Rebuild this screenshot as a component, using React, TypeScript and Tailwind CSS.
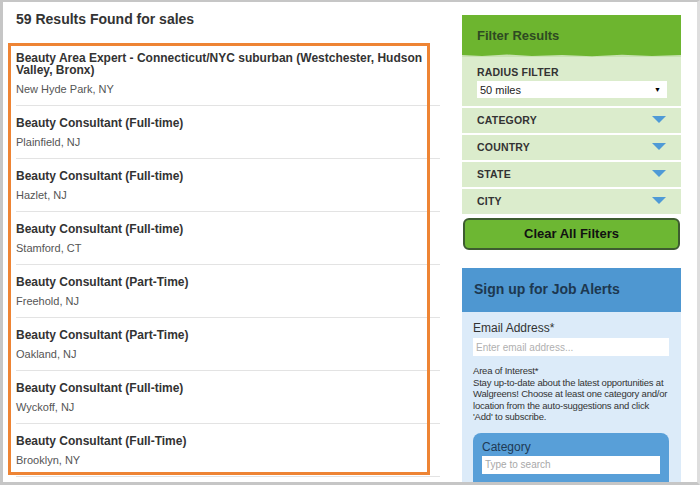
import React from 'react';

type Job = { title: string; place: string };

const jobs: Job[] = [
  { title: 'Beauty Area Expert - Connecticut/NYC suburban (Westchester, Hudson Valley, Bronx)', place: 'New Hyde Park, NY' },
  { title: 'Beauty Consultant (Full-time)', place: 'Plainfield, NJ' },
  { title: 'Beauty Consultant (Full-time)', place: 'Hazlet, NJ' },
  { title: 'Beauty Consultant (Full-time)', place: 'Stamford, CT' },
  { title: 'Beauty Consultant (Part-Time)', place: 'Freehold, NJ' },
  { title: 'Beauty Consultant (Part-Time)', place: 'Oakland, NJ' },
  { title: 'Beauty Consultant (Full-time)', place: 'Wyckoff, NJ' },
  { title: 'Beauty Consultant (Full-Time)', place: 'Brooklyn, NY' },
];

const filters = ['CATEGORY', 'COUNTRY', 'STATE', 'CITY'];

function Caret() {
  return (
    <svg width="14" height="7" viewBox="0 0 14 7" className="mb-[3px] shrink-0">
      <path d="M0 0 H14 L7 7 Z" fill="#4f9ad6" />
    </svg>
  );
}

export default function App() {
  return (
    <div className="relative h-[485px] w-[700px] overflow-hidden border-t-2 border-b-[3px] border-l-[3px] border-r-[3px] border-[#c6c6c6] border-r-[#dedede] bg-white font-['Liberation_Sans',Arial,sans-serif] text-[#333]">
      <div className="flex">
        {/* results column */}
        <div className="w-[442px] pl-[13px] pr-[5px]">
          <h2 className="pt-[9px] text-[14px] font-bold leading-[16px] text-[#333]">59 Results Found for sales</h2>
          <ul className="mt-[14px]">
            {jobs.map((job, i) => (
              <li key={i} className="border-b border-[#e3e3e3] pt-[11px] pb-[9px]">
                <p className="text-[12px] font-bold leading-[12px] text-[#333]">{job.title}</p>
                <p className="mt-[6px] text-[11px] leading-[14px] text-[#555]">{job.place}</p>
              </li>
            ))}
          </ul>
        </div>

        {/* sidebar */}
        <aside className="ml-[17px] w-[219px] pt-[13px]">
          <div className="relative h-[42px] bg-[#6db52f] pl-[15px] pt-[13px]">
            <h3 className="text-[13px] font-bold leading-[16px] text-[#2e4a22]">Filter Results</h3>
            <svg className="absolute bottom-0 left-0" width="219" height="4" viewBox="0 0 219 4" preserveAspectRatio="none">
              <path d="M0 2 L20 3 L45 1.5 L70 3 L100 2 L130 3.2 L160 1.8 L190 3 L219 2 V4 H0 Z" fill="#c9e2b3" />
            </svg>
          </div>
          <div className="bg-[#dbeccc] px-[15px] pt-[9px] pb-[8px]">
            <p className="text-[10.5px] font-bold leading-[12px] tracking-[0.2px] text-[#333]">RADIUS FILTER</p>
            <div className="mt-[3px] flex h-[17px] w-[190px] items-center justify-between bg-white pl-[3px] pr-[6px]">
              <span className="text-[11px] leading-[12px] text-[#222]">50 miles</span>
              <span className="text-[7px] leading-none text-black">▼</span>
            </div>
          </div>
          {filters.map((f) => (
            <div key={f} className="mt-[2px] flex h-[25px] items-center justify-between bg-[#dbeccc] pl-[15px] pr-[15px]">
              <span className="text-[10.5px] font-bold tracking-[0.2px] text-[#333]">{f}</span>
              <Caret />
            </div>
          ))}

          <button
            type="button"
            className="mt-[4px] ml-[1px] flex h-[32px] w-[217px] items-center justify-center rounded-[6px] border-2 border-[#3d5c30] bg-[#6db733] text-[13px] font-bold text-[#111]"
          >
            Clear All Filters
          </button>

          <div className="mt-[18px]">
            <div className="h-[44px] bg-[#4e97d1] pl-[12px] pt-[13px]">
              <h3 className="text-[14px] font-bold leading-[16px] text-[#1d3850]">Sign up for Job Alerts</h3>
            </div>
            <div className="h-[200px] bg-[#dcebf9] px-[11px] pt-[9px]">
              <p className="text-[12px] leading-[14px] text-[#333]">Email Address*</p>
              <div className="mt-[3px] flex h-[18px] w-[196px] items-center bg-white pl-[3px] text-[10px] text-[#b0b0b0]">
                Enter email address...
              </div>
              <p className="mt-[9px] w-[196px] text-[9.5px] leading-[11.5px] tracking-[-0.2px] text-[#333]">
                Area of Interest*
                <br />
                Stay up-to-date about the latest opportunities at Walgreens! Choose at least one category and/or location from the auto-suggestions and click 'Add' to subscribe.
              </p>
              <div className="mt-[10px] w-[196px] rounded-t-[8px] bg-[#589fd8] px-[9px] pt-[7px] pb-[10px]">
                <p className="text-[12px] leading-[14px] text-[#1e3a55]">Category</p>
                <div className="mt-[2px] flex h-[18px] w-[178px] items-center bg-white pl-[3px] text-[10px] text-[#a8a8a8]">
                  Type to search
                </div>
              </div>
            </div>
          </div>
        </aside>
      </div>

      {/* highlight box drawn over the list */}
      <div className="pointer-events-none absolute left-[5px] top-[41px] h-[432px] w-[422px] border-[3px] border-[#ee8434]" />
    </div>
  );
}
